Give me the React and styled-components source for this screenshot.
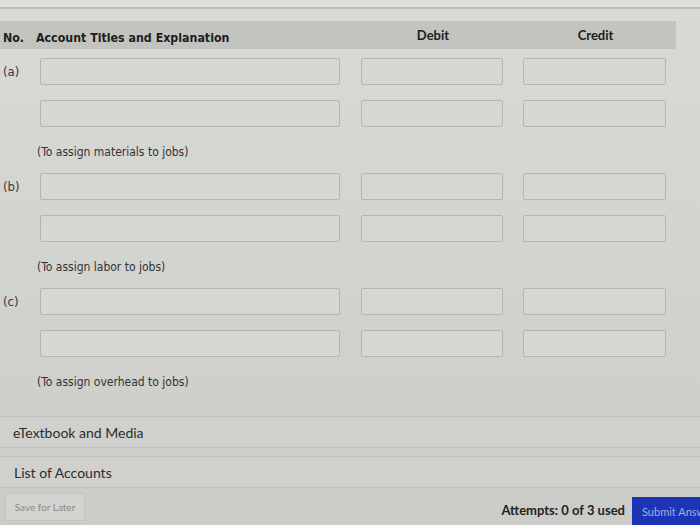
import styled, { createGlobalStyle } from "styled-components"

const Global = createGlobalStyle`
  html, body {
    margin: 0;
    padding: 0;
    background: #d4d4d0;
  }
  body {
    font-family: "Lato", "Noto Sans", sans-serif;
    color: #2a2a2a;
    overflow: hidden;
  }
`

const Page = styled.div`
  width: 700px;
  height: 525px;
  background: linear-gradient(180deg, #d9d9d6 0%, #d2d2ce 55%, #cbcbc7 100%);
  display: flex;
  flex-direction: column;
  overflow: hidden;
`

const TopStrip = styled.div`
  height: 11px;
  border-bottom: 2px solid #bcbcb8;
  background: #dededb;
`

const Table = styled.div`
  padding-top: 12px;
  width: 676px;
`

const HeadRow = styled.div`
  display: grid;
  grid-template-columns: 33px 318px 164px 161px;
  align-items: center;
  height: 28px;
  background: #c3c3c0;
  font-weight: 700;
  font-size: 13px;
`

const HeadCell = styled.div`
  font-family: ${p => (p.lato ? '"Lato", sans-serif' : '"DejaVu Sans Condensed", "DejaVu Sans", sans-serif')};
  font-size: ${p => (p.lato ? 13 : 12.3)}px;
  text-align: ${p => (p.center ? "center" : "left")};
  padding-left: ${p => (p.center ? 0 : 3)}px;
  padding-top: ${p => (p.lato ? 0 : 6)}px;
  color: #1d1d1d;
`

const Group = styled.div`
  display: flex;
  flex-direction: column;
  padding-top: ${p => (p.first ? 9 : 13)}px;
`

const EntryRow = styled.div`
  display: grid;
  grid-template-columns: 40px 300px 162px 163px;
  align-items: center;
  height: 27px;
  margin-bottom: 15px;
`

const Label = styled.div`
  font-family: "DejaVu Sans Condensed", "DejaVu Sans", sans-serif;
  font-size: 13px;
  color: #3a3a3a;
  padding-left: 3px;
`

const Input = styled.div`
  height: 25px;
  border: 1px solid #b5b5b1;
  border-radius: 2px;
  background: #d6d6d3;
  width: ${p => p.w}px;
  margin-left: ${p => p.ml || 0}px;
`

const Note = styled.div`
  font-family: "DejaVu Sans Condensed", "DejaVu Sans", sans-serif;
  font-size: 12px;
  color: #333;
  padding-left: 37px;
  padding-top: 2px;
  height: 16px;
  line-height: 16px;
`

const Bars = styled.div`
  margin-top: 26px;
  display: flex;
  flex-direction: column;
  gap: 8px;
`

const Bar = styled.div`
  height: 30px;
  border-top: 1px solid #c0c0bc;
  border-bottom: 1px solid #c0c0bc;
  background: #d0d0cc;
  font-size: 14px;
  color: #2c2c2c;
  display: flex;
  align-items: center;
  padding-left: ${p => p.pad}px;
`

const Footer = styled.div`
  margin-top: 5px;
  display: flex;
  align-items: flex-end;
  padding-left: 5px;
`

const SaveButton = styled.div`
  width: 78px;
  height: 26px;
  border: 1px solid #c2c2be;
  background: #d3d3cf;
  color: #8a8a86;
  font-size: 10px;
  display: flex;
  align-items: center;
  justify-content: center;
  margin-bottom: 4px;
`

const Attempts = styled.div`
  margin-left: auto;
  font-size: 13px;
  font-weight: 700;
  color: #222;
  padding-bottom: 7px;
  margin-right: 7px;
`

const SubmitButton = styled.div`
  width: 68px;
  height: 28px;
  background: #1d35b4;
  color: #9fb0ea;
  font-size: 11px;
  display: flex;
  align-items: center;
  padding-left: 10px;
  white-space: nowrap;
  overflow: hidden;
  box-sizing: border-box;
`

const groups = [
  { label: "(a)", note: "(To assign materials to jobs)" },
  { label: "(b)", note: "(To assign labor to jobs)" },
  { label: "(c)", note: "(To assign overhead to jobs)" },
]

const App = () => {
  return (
    <Page>
      <Global />
      <TopStrip />
      <Table>
        <HeadRow>
          <HeadCell>No.</HeadCell>
          <HeadCell>Account Titles and Explanation</HeadCell>
          <HeadCell lato center>Debit</HeadCell>
          <HeadCell lato center>Credit</HeadCell>
        </HeadRow>
        {groups.map((g, i) => (
          <Group key={g.label} first={i === 0}>
            <EntryRow>
              <Label>{g.label}</Label>
              <Input w={298} />
              <Input w={140} ml={21} />
              <Input w={141} ml={21} />
            </EntryRow>
            <EntryRow>
              <div />
              <Input w={298} />
              <Input w={140} ml={21} />
              <Input w={141} ml={21} />
            </EntryRow>
            <Note>{g.note}</Note>
          </Group>
        ))}
      </Table>
      <Bars>
        <Bar pad={13}>eTextbook and Media</Bar>
        <Bar pad={14}>List of Accounts</Bar>
      </Bars>
      <Footer>
        <SaveButton>Save for Later</SaveButton>
        <Attempts>Attempts: 0 of 3 used</Attempts>
        <SubmitButton>Submit Answer</SubmitButton>
      </Footer>
    </Page>
  )
}

export default App
